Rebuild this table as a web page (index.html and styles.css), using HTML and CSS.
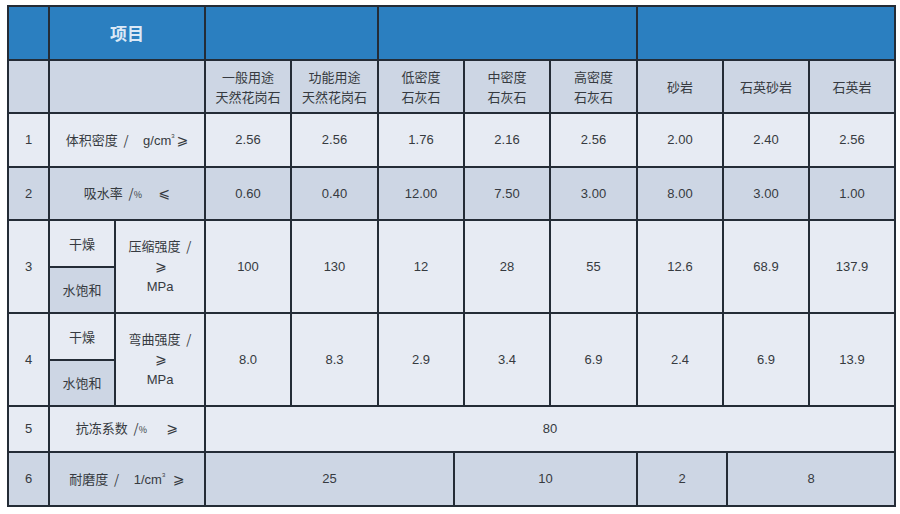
FILE: index.html
```html
<!DOCTYPE html>
<html lang="zh">
<head>
<meta charset="utf-8">
<title>石材物理性能</title>
<link rel="stylesheet" href="styles.css">
</head>
<body>
<table class="spec">
  <colgroup>
    <col class="w41"><col class="w66"><col class="w90"><col class="w86"><col class="w87"><col class="w76"><col class="w10"><col class="w86"><col class="w87"><col class="w86"><col class="w4"><col class="w82"><col class="w86">
  </colgroup>
  <tr class="r-head">
    <td class="hd"></td>
    <td class="hd title" colspan="2">项目</td>
    <td class="hd" colspan="2"></td>
    <td class="hd" colspan="4"></td>
    <td class="hd" colspan="4"></td>
  </tr>
  <tr class="r-sub dk">
    <td></td>
    <td colspan="2"></td>
    <td>一般用途<br>天然花岗石</td>
    <td>功能用途<br>天然花岗石</td>
    <td colspan="2">低密度<br>石灰石</td>
    <td>中密度<br>石灰石</td>
    <td>高密度<br>石灰石</td>
    <td>砂岩</td>
    <td colspan="2">石英砂岩</td>
    <td>石英岩</td>
  </tr>
  <tr class="r-std lt">
    <td class="num">1</td>
    <td colspan="2" class="label">体积密度 &nbsp;/ &nbsp; &nbsp; <span class="unit">g/cm<sup>3</sup></span><span class="ge">⩾</span></td>
    <td class="num">2.56</td>
    <td class="num">2.56</td>
    <td colspan="2" class="num">1.76</td>
    <td class="num">2.16</td>
    <td class="num">2.56</td>
    <td class="num">2.00</td>
    <td colspan="2" class="num">2.40</td>
    <td class="num">2.56</td>
  </tr>
  <tr class="r-std2 dk">
    <td class="num">2</td>
    <td colspan="2" class="label">吸水率 &nbsp;/<span class="pct">%</span> &nbsp; &nbsp; <span class="ge">⩽</span></td>
    <td class="num">0.60</td>
    <td class="num">0.40</td>
    <td colspan="2" class="num">12.00</td>
    <td class="num">7.50</td>
    <td class="num">3.00</td>
    <td class="num">8.00</td>
    <td colspan="2" class="num">3.00</td>
    <td class="num">1.00</td>
  </tr>
  <tr class="r-a lt">
    <td rowspan="2" class="num">3</td>
    <td class="label">干燥</td>
    <td rowspan="2" class="label multi">压缩强度 &nbsp;/<br><span class="ge">⩾</span><br><span class="unit">MPa</span></td>
    <td rowspan="2" class="num">100</td>
    <td rowspan="2" class="num">130</td>
    <td rowspan="2" colspan="2" class="num">12</td>
    <td rowspan="2" class="num">28</td>
    <td rowspan="2" class="num">55</td>
    <td rowspan="2" class="num">12.6</td>
    <td rowspan="2" colspan="2" class="num">68.9</td>
    <td rowspan="2" class="num">137.9</td>
  </tr>
  <tr class="r-b lt">
    <td class="label dk-cell">水饱和</td>
  </tr>
  <tr class="r-a lt">
    <td rowspan="2" class="num">4</td>
    <td class="label">干燥</td>
    <td rowspan="2" class="label multi">弯曲强度 &nbsp;/<br><span class="ge">⩾</span><br><span class="unit">MPa</span></td>
    <td rowspan="2" class="num">8.0</td>
    <td rowspan="2" class="num">8.3</td>
    <td rowspan="2" colspan="2" class="num">2.9</td>
    <td rowspan="2" class="num">3.4</td>
    <td rowspan="2" class="num">6.9</td>
    <td rowspan="2" class="num">2.4</td>
    <td rowspan="2" colspan="2" class="num">6.9</td>
    <td rowspan="2" class="num">13.9</td>
  </tr>
  <tr class="r-b lt">
    <td class="label dk-cell">水饱和</td>
  </tr>
  <tr class="r-five lt">
    <td class="num">5</td>
    <td colspan="2" class="label">抗冻系数 &nbsp;/<span class="pct">%</span> &nbsp; &nbsp; &nbsp;<span class="ge">⩾</span></td>
    <td colspan="10" class="num">80</td>
  </tr>
  <tr class="r-six dk">
    <td class="num">6</td>
    <td colspan="2" class="label">耐磨度 &nbsp;/ &nbsp; &nbsp; <span class="unit">1/cm<sup>3</sup></span> &nbsp;<span class="ge">⩾</span></td>
    <td colspan="3" class="num">25</td>
    <td colspan="3" class="num">10</td>
    <td colspan="2" class="num">2</td>
    <td colspan="2" class="num">8</td>
  </tr>
</table>
</body>
</html>
```

FILE: styles.css
```css
html, body {
  margin: 0;
  padding: 0;
  background: #ffffff;
}

body {
  padding: 5px 0 0 7px;
  font-family: "Liberation Sans", "Noto Sans CJK SC", sans-serif;
  color: #363a40;
}

.spec {
  border-collapse: collapse;
  table-layout: fixed;
  width: 887px;
}

.spec td {
  border: 2px solid #242c36;
  padding: 0;
  text-align: center;
  vertical-align: middle;
  font-size: 13px;
  line-height: 20px;
  font-family: "Noto Sans CJK SC", "Liberation Sans", sans-serif;
}

.w41 { width: 41px; }
.w66 { width: 66px; }
.w90 { width: 90px; }
.w86 { width: 86px; }
.w87 { width: 87px; }
.w76 { width: 76px; }
.w10 { width: 10px; }
.w4 { width: 4px; }
.w82 { width: 82px; }

.r-head { height: 54px; }
.r-sub { height: 53px; }
.r-std { height: 54px; }
.r-std2 { height: 53px; }
.r-a { height: 47px; }
.r-b { height: 46px; }
.r-five { height: 46px; }
.r-six { height: 54px; }

.spec td.hd {
  background: #2b7fc0;
}

.spec td.title {
  color: #dce9f6;
  font-size: 17px;
  font-weight: bold;
}

.dk td {
  background: #cdd6e4;
}

.lt td {
  background: #e7ebf3;
}

.spec td.dk-cell {
  background: #cdd6e4;
}

.spec td.num {
  font-family: "Liberation Sans", "Noto Sans CJK SC", sans-serif;
  font-size: 13px;
}

.unit {
  font-family: "Liberation Sans", sans-serif;
  font-size: 13px;
}

.ge {
  font-family: "DejaVu Sans", "Liberation Sans", sans-serif;
  font-size: 14px;
  padding-left: 2px;
}

.spec td.label {
  font-family: "Noto Sans CJK SC", "Liberation Sans", sans-serif;
  font-size: 13px;
}

.spec sup {
  font-size: 6px;
  vertical-align: 7px;
  line-height: 0;
}

.pct {
  font-size: 9px;
}
```
